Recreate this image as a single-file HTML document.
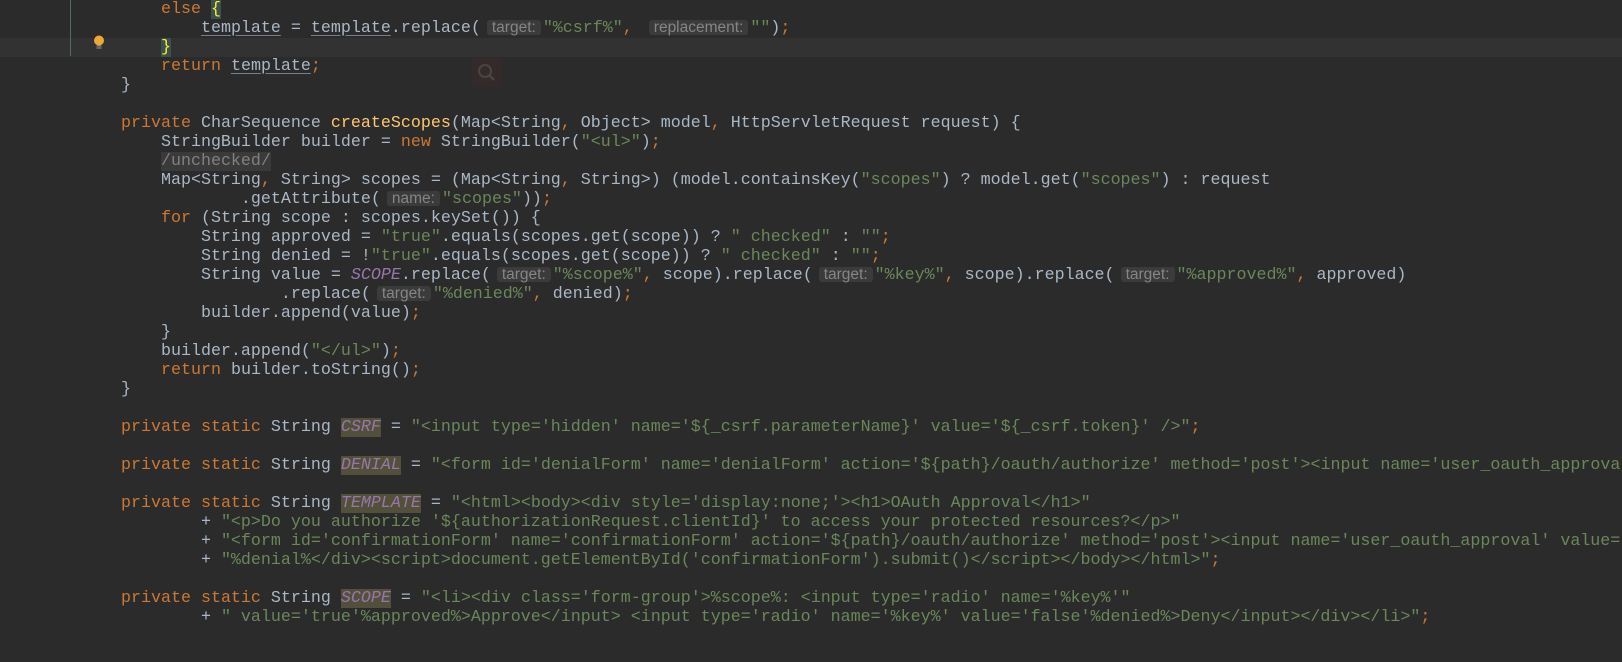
<!DOCTYPE html>
<html><head><meta charset="utf-8"><style>
html,body{margin:0;padding:0;background:#2b2b2b;width:1622px;height:662px;overflow:hidden;position:relative;}
.cur{position:absolute;left:0;top:37.5px;width:1622px;height:19px;background:#323232;}
.gl{position:absolute;left:70px;top:0;width:1px;height:56px;background:#4f6d62;}
.code{position:absolute;left:81px;top:-0.5px;width:1541px;height:662px;overflow:hidden;margin:0;font-family:"Liberation Mono",monospace;font-size:16.67px;line-height:19px;color:#a9b7c6;white-space:pre;}
.k{color:#cc7832}.s{color:#6a8759}.m{color:#ffc66d}
.f{color:#9876aa;font-style:italic}
.fh{color:#9876aa;font-style:italic;background:#52503a}
.u{text-decoration:underline;text-decoration-color:#76808a;text-underline-offset:3px}
.h{display:inline-block;font-family:"Liberation Sans",sans-serif;font-size:15.5px;line-height:15px;color:#858585;background:#3b3b3b;border-radius:3px;padding:0 5px;margin:0 2px 0 6px;vertical-align:0px}
.b{background:#3b514d;color:#ffef28}
.fold{background:#3a3a3a;color:#808080}
</style></head><body>
<div class="cur"></div>
<div class="gl"></div>
<svg style="position:absolute;left:90px;top:33px" width="18" height="18" viewBox="0 0 18 18">
<circle cx="9" cy="7.5" r="5" fill="#f0a732"/>
<rect x="6.5" y="12.5" width="5" height="1" fill="#9a9a9a"/>
<rect x="6.5" y="14.5" width="5" height="1" fill="#9a9a9a"/>
</svg>
<div style="position:absolute;left:472px;top:58px;width:29px;height:29px;background:#352a2a;border-radius:3px"></div>
<svg style="position:absolute;left:472px;top:58px" width="29" height="29" viewBox="0 0 29 29">
<circle cx="13" cy="13" r="6" fill="none" stroke="#4a4444" stroke-width="2"/>
<line x1="17.5" y1="17.5" x2="22" y2="22" stroke="#4a4444" stroke-width="2.5"/>
</svg>
<pre class="code">        <span class="k">else</span> <span class="b">{</span>
            <span class="u">template</span> = <span class="u">template</span>.replace(<span class="h">target:</span><span class="s">"%csrf%"</span><span class="k">,</span> <span class="h">replacement:</span><span class="s">""</span>)<span class="k">;</span>
        <span class="b">}</span>
        <span class="k">return</span> <span class="u">template</span><span class="k">;</span>
    }

    <span class="k">private</span> CharSequence <span class="m">createScopes</span>(Map&lt;String<span class="k">,</span> Object&gt; model<span class="k">,</span> HttpServletRequest request) {
        StringBuilder builder = <span class="k">new</span> StringBuilder(<span class="s">"&lt;ul&gt;"</span>)<span class="k">;</span>
        <span class="fold">/unchecked/</span>
        Map&lt;String<span class="k">,</span> String&gt; scopes = (Map&lt;String<span class="k">,</span> String&gt;) (model.containsKey(<span class="s">"scopes"</span>) ? model.get(<span class="s">"scopes"</span>) : request
                .getAttribute(<span class="h">name:</span><span class="s">"scopes"</span>))<span class="k">;</span>
        <span class="k">for</span> (String scope : scopes.keySet()) {
            String approved = <span class="s">"true"</span>.equals(scopes.get(scope)) ? <span class="s">" checked"</span> : <span class="s">""</span><span class="k">;</span>
            String denied = !<span class="s">"true"</span>.equals(scopes.get(scope)) ? <span class="s">" checked"</span> : <span class="s">""</span><span class="k">;</span>
            String value = <span class="f">SCOPE</span>.replace(<span class="h">target:</span><span class="s">"%scope%"</span><span class="k">,</span> scope).replace(<span class="h">target:</span><span class="s">"%key%"</span><span class="k">,</span> scope).replace(<span class="h">target:</span><span class="s">"%approved%"</span><span class="k">,</span> approved)
                    .replace(<span class="h">target:</span><span class="s">"%denied%"</span><span class="k">,</span> denied)<span class="k">;</span>
            builder.append(value)<span class="k">;</span>
        }
        builder.append(<span class="s">"&lt;/ul&gt;"</span>)<span class="k">;</span>
        <span class="k">return</span> builder.toString()<span class="k">;</span>
    }

    <span class="k">private static</span> String <span class="fh">CSRF</span> = <span class="s">"&lt;input type='hidden' name='${_csrf.parameterName}' value='${_csrf.token}' /&gt;"</span><span class="k">;</span>

    <span class="k">private static</span> String <span class="fh">DENIAL</span> = <span class="s">"&lt;form id='denialForm' name='denialForm' action='${path}/oauth/authorize' method='post'&gt;&lt;input name='user_oauth_approval' value='false' type='hidden'/&gt;"</span>

    <span class="k">private static</span> String <span class="fh">TEMPLATE</span> = <span class="s">"&lt;html&gt;&lt;body&gt;&lt;div style='display:none;'&gt;&lt;h1&gt;OAuth Approval&lt;/h1&gt;"</span>
            + <span class="s">"&lt;p&gt;Do you authorize '${authorizationRequest.clientId}' to access your protected resources?&lt;/p&gt;"</span>
            + <span class="s">"&lt;form id='confirmationForm' name='confirmationForm' action='${path}/oauth/authorize' method='post'&gt;&lt;input name='user_oauth_approval' value='true' type='hidden'/&gt;"</span>
            + <span class="s">"%denial%&lt;/div&gt;&lt;script&gt;document.getElementById('confirmationForm').submit()&lt;/script&gt;&lt;/body&gt;&lt;/html&gt;"</span><span class="k">;</span>

    <span class="k">private static</span> String <span class="fh">SCOPE</span> = <span class="s">"&lt;li&gt;&lt;div class='form-group'&gt;%scope%: &lt;input type='radio' name='%key%'"</span>
            + <span class="s">" value='true'%approved%&gt;Approve&lt;/input&gt; &lt;input type='radio' name='%key%' value='false'%denied%&gt;Deny&lt;/input&gt;&lt;/div&gt;&lt;/li&gt;"</span><span class="k">;</span>
</pre>
</body></html>
